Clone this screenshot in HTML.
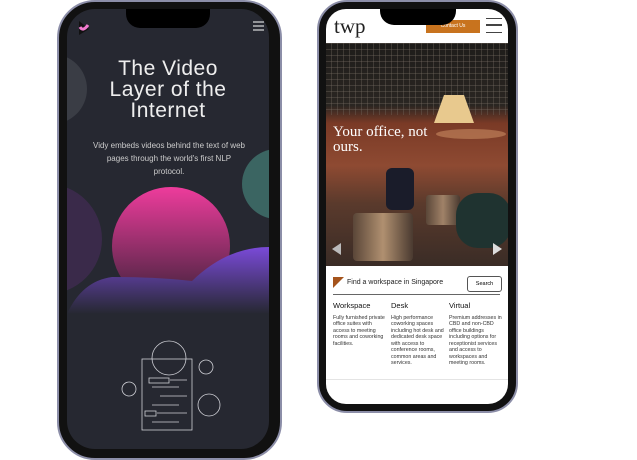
<!DOCTYPE html><html><head><style>
body{margin:0;width:637px;height:460px;background:#fff;position:relative;overflow:hidden;font-family:"Liberation Sans",sans-serif}
.ph{position:absolute;background:#111;border:2px solid #8c8ea8;box-sizing:border-box}
.scr{position:absolute;overflow:hidden}
.notch{position:absolute;background:#000;border-radius:0 0 14px 14px}
</style></head><body>
<div class="ph" style="left:57px;top:0;width:225px;height:460px;border-radius:38px"></div>
<div class="scr" style="left:67px;top:9px;width:202px;height:440px;border-radius:28px;background:#262831">
 <svg width="202" height="440" style="position:absolute;left:0;top:0">
  <defs>
   <linearGradient id="g1" x1="0" y1="0" x2="0" y2="1"><stop offset="0" stop-color="#ee3c9c"/><stop offset="1" stop-color="#3a2238"/></linearGradient>
   <linearGradient id="g2" x1="0" y1="0" x2="0" y2="1"><stop offset="0" stop-color="#7a4ad8"/><stop offset="1" stop-color="#262831"/></linearGradient>
  </defs>
  <circle cx="-15" cy="80" r="35" fill="#3a3d45"/>
  <circle cx="-20" cy="230" r="55" fill="#3a2a4a"/>
  <circle cx="210" cy="175" r="35" fill="#3b6562"/>
  <circle cx="104" cy="237" r="59" fill="url(#g1)"/>
  <path d="M0 305 Q15 272 45 268 Q90 268 125 272 Q160 238 202 238 L202 305 Z" fill="url(#g2)"/>
  <g stroke="#cfd0d6" fill="none" stroke-width="0.8">
   <circle cx="102" cy="349" r="17"/><circle cx="139" cy="358" r="7"/><circle cx="62" cy="380" r="7"/><circle cx="142" cy="396" r="11"/>
   <rect x="75" y="350" width="50" height="71"/><rect x="82" y="369" width="20" height="5"/><rect x="78" y="402" width="11" height="5"/>
   <path d="M103 371H120M85 378H112M93 387H120M85 396H112M90 404H120M85 413H112"/>
  </g>
  <path d="M12 12 L22 20 L12 26Z" fill="#111"/><path d="M13 18q3 5 8 -2" stroke="#f17bd0" stroke-width="3" fill="none"/>
  <path d="M186 13h11M186 17h11M186 21h11" stroke="#fff" stroke-width="1"/>
 </svg>
 <div style="position:absolute;left:0;width:202px;top:49px;text-align:center;color:#eee;font-size:21px;line-height:21px;letter-spacing:0.5px">The Video<br>Layer of the<br>Internet</div>
 <div style="position:absolute;left:26px;width:152px;top:130px;text-align:center;color:#ccc;font-size:8px;line-height:13px">Vidy embeds videos behind the text of web pages through the world's first NLP protocol.</div>
</div>
<div class="notch" style="left:126px;top:9px;width:84px;height:19px"></div>
<div class="ph" style="left:317px;top:0;width:201px;height:413px;border-radius:30px"></div>
<div class="scr" style="left:326px;top:9px;width:182px;height:395px;border-radius:20px;background:#fff">
 <div style="position:absolute;left:8px;top:5px;font-family:'Liberation Serif',serif;font-size:21px;color:#222">twp</div>
 <div style="position:absolute;left:100px;top:11px;width:54px;height:13px;background:#c8731e;color:#fff;font-size:5px;text-align:center;line-height:13px">Contact Us</div>
 <div style="position:absolute;left:160px;top:9px;width:16px;height:15px;border-top:1.5px solid #444;border-bottom:1.5px solid #444;box-sizing:border-box"><div style="margin-top:5px;height:1.5px;background:#444"></div></div>
 <div style="position:absolute;left:0;top:34px;width:182px;height:223px;background:linear-gradient(180deg,#1e1c1a 0,#2a2622 28%,#7a3a26 36%,#8e4a32 55%,#5a3a2c 72%,#3a2c26 100%)">
  <div style="position:absolute;left:0;top:0;width:182px;height:72px;background:repeating-linear-gradient(90deg,transparent 0 5px,rgba(120,110,100,.35) 5px 6px),repeating-linear-gradient(0deg,transparent 0 5px,rgba(120,110,100,.35) 5px 6px)"></div>
  <div style="position:absolute;left:108px;top:52px;width:40px;height:28px;background:#e8c98e;clip-path:polygon(25% 0,75% 0,100% 100%,0 100%)"></div>
  <div style="position:absolute;left:110px;top:86px;width:70px;height:10px;background:#c88a60;border-radius:50%;opacity:.6"></div>
  <div style="position:absolute;left:60px;top:125px;width:28px;height:42px;background:#1a1c2a;border-radius:6px"></div>
  <div style="position:absolute;left:27px;top:170px;width:60px;height:48px;background:linear-gradient(90deg,#5a4638,#b09070,#4a3a30);border-radius:4px"></div>
  <div style="position:absolute;left:100px;top:152px;width:34px;height:30px;background:linear-gradient(90deg,#5a4638,#a08268,#4a3a30);border-radius:3px"></div>
  <div style="position:absolute;left:130px;top:150px;width:55px;height:55px;background:#1f3330;border-radius:22px"></div>
  <div style="position:absolute;left:6px;top:200px;width:0;height:0;border:6px solid transparent;border-right:9px solid #bbb;border-left:0"></div>
  <div style="position:absolute;left:167px;top:200px;width:0;height:0;border:6px solid transparent;border-left:9px solid #ddd;border-right:0"></div>
  <div style="position:absolute;left:7px;top:82px;color:#fff;font-family:'Liberation Serif',serif;font-size:15px;line-height:15px">Your office, not<br>ours.</div>
 </div>
 <div style="position:absolute;left:7px;top:268px;width:11px;height:11px;background:#a5541c;clip-path:polygon(0 0,100% 0,0 100%)"></div>
 <div style="position:absolute;left:21px;top:270px;font-size:7px;color:#222">Find a workspace in Singapore</div>
 <div style="position:absolute;left:141px;top:267px;width:33px;height:14px;border:1px solid #555;border-radius:3px;font-size:5.5px;text-align:center;line-height:14px">Search</div>
 <div style="position:absolute;left:7px;top:285px;width:167px;height:1px;background:#666"></div>
 <div style="position:absolute;left:7px;top:294px;width:55px;font-size:5.3px;color:#333;line-height:6.5px"><div style="font-size:7.5px;color:#111;margin-bottom:5px">Workspace</div>Fully furnished private office suites with access to meeting rooms and coworking facilities.</div>
 <div style="position:absolute;left:65px;top:294px;width:54px;font-size:5.3px;color:#333;line-height:6.5px"><div style="font-size:7.5px;color:#111;margin-bottom:5px">Desk</div>High performance coworking spaces including hot desk and dedicated desk space with access to conference rooms, common areas and services.</div>
 <div style="position:absolute;left:123px;top:294px;width:56px;font-size:5.3px;color:#333;line-height:6.5px"><div style="font-size:7.5px;color:#111;margin-bottom:5px">Virtual</div>Premium addresses in CBD and non-CBD office buildings including options for receptionist services and access to workspaces and meeting rooms.</div>
 <div style="position:absolute;left:0;top:370px;width:182px;height:1px;background:#e4e4e4"></div>
</div>
<div class="notch" style="left:380px;top:9px;width:76px;height:16px"></div>
</body></html>
